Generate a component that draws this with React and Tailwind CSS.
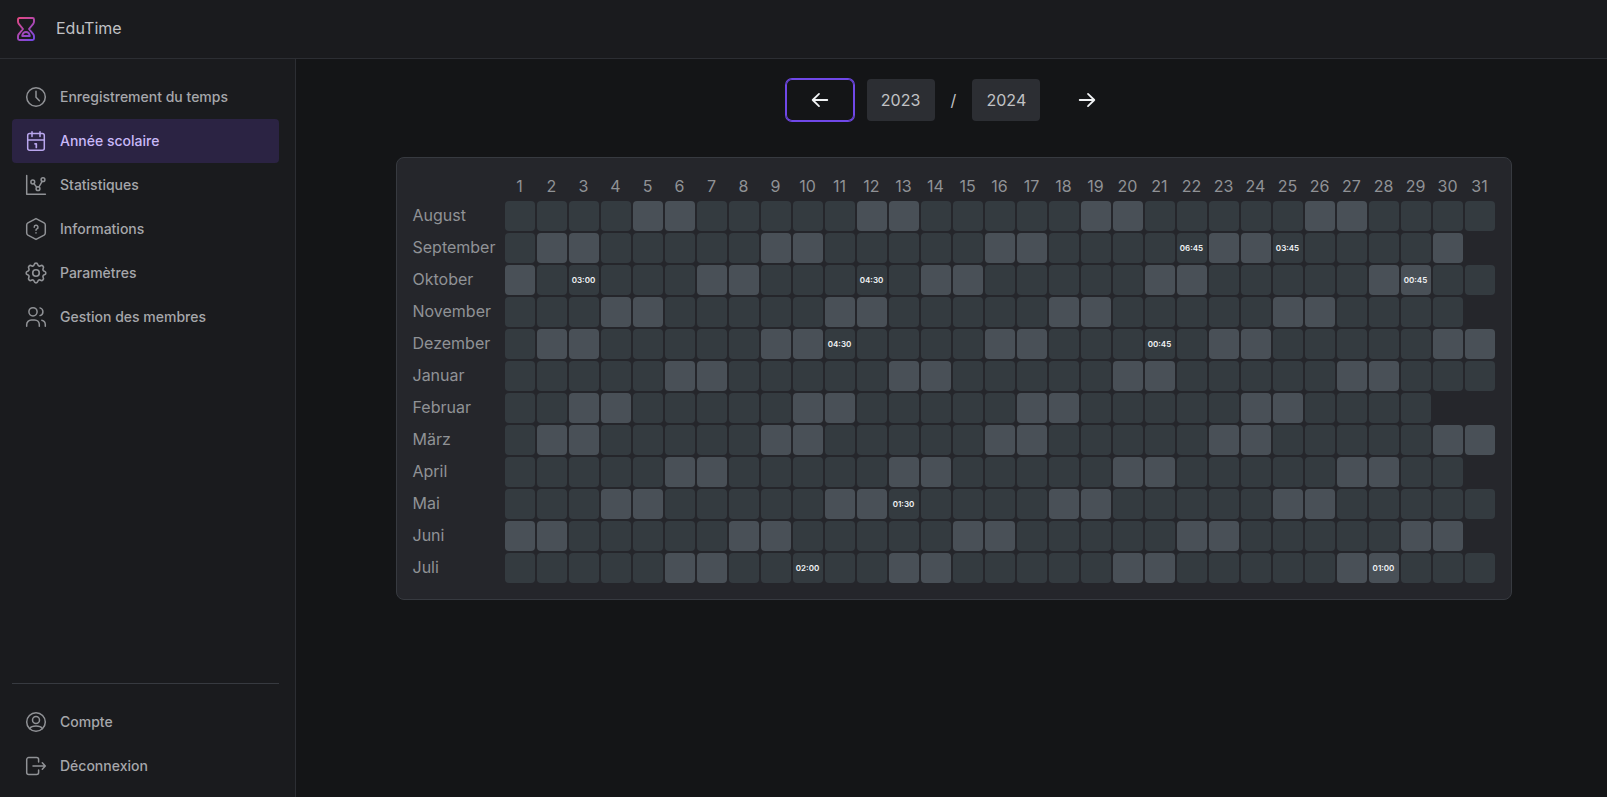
const navLinks = [
  { label: "Enregistrement du temps", icon: ClockIcon },
  { label: "Année scolaire", icon: CalendarIcon, active: true },
  { label: "Statistiques", icon: ChartIcon },
  { label: "Informations", icon: InfoIcon },
  { label: "Paramètres", icon: GearIcon },
  { label: "Gestion des membres", icon: UsersIcon },
];

const accountLinks = [
  { label: "Compte", icon: AccountIcon },
  { label: "Déconnexion", icon: LogoutIcon },
];

// month is zero based, entries maps day -> recorded time
const months = [
  { name: "August", year: 2023, month: 7, entries: {} },
  { name: "September", year: 2023, month: 8, entries: { 22: "06:45", 25: "03:45" } },
  { name: "Oktober", year: 2023, month: 9, entries: { 3: "03:00", 12: "04:30", 29: "00:45" } },
  { name: "November", year: 2023, month: 10, entries: {} },
  { name: "Dezember", year: 2023, month: 11, entries: { 11: "04:30", 21: "00:45" } },
  { name: "Januar", year: 2024, month: 0, entries: {} },
  { name: "Februar", year: 2024, month: 1, entries: {} },
  { name: "März", year: 2024, month: 2, entries: {} },
  { name: "April", year: 2024, month: 3, entries: {} },
  { name: "Mai", year: 2024, month: 4, entries: { 13: "01:30" } },
  { name: "Juni", year: 2024, month: 5, entries: {} },
  { name: "Juli", year: 2024, month: 6, entries: { 10: "02:00", 28: "01:00" } },
];

const days = Array.from({ length: 31 }, (_, i) => i + 1);

function Icon({ children, viewBox = "0 0 24 24" }) {
  return (
    <svg
      className="size-6 shrink-0"
      viewBox={viewBox}
      fill="none"
      stroke="currentColor"
      strokeWidth="1.5"
      strokeLinecap="round"
      strokeLinejoin="round"
      aria-hidden="true"
    >
      {children}
    </svg>
  );
}

function ClockIcon() {
  return (
    <Icon>
      <circle cx="12" cy="12" r="9.3" />
      <path d="M12 6.3v5.9l3.4 3.6" />
    </Icon>
  );
}

function CalendarIcon() {
  return (
    <Icon>
      <rect x="3.7" y="4.6" width="16.6" height="16.7" rx="2" />
      <path d="M3.7 10.9h16.6M8 2.7v4.7M16 2.7v4.7" />
      <path d="M11 14.8h1.300v3.600" strokeWidth="1.7" />
    </Icon>
  );
}

function ChartIcon() {
  return (
    <Icon>
      <path d="M2.7 2.6v18.700h18.700" />
      <circle cx="8.8" cy="9" r="1.9" />
      <circle cx="14" cy="15.7" r="1.9" />
      <circle cx="19" cy="6.7" r="1.9" />
      <path d="M9.9 10.6l2.9 3.6M15 14l3.1-5.6" />
    </Icon>
  );
}

function InfoIcon() {
  return (
    <Icon>
      <path d="M12 1.6l8.1 4.2q1.2.7 1.2 2.1v8.2q0 1.4-1.2 2.1L12 22.4l-8.1-4.2q-1.2-.7-1.2-2.1V7.9q0-1.4 1.2-2.1z" />
      <path d="M10.2 10.2a1.9 1.9 0 1 1 2.7 1.7c-.6.3-.9.7-.9 1.4" />
      <path d="M12 15.8v.1" />
    </Icon>
  );
}

function GearIcon() {
  return (
    <Icon viewBox="1 1 22 22">
      <path d="M10.325 4.317c.426-1.756 2.924-1.756 3.35 0a1.724 1.724 0 0 0 2.573 1.066c1.543-.94 3.31.826 2.37 2.37a1.724 1.724 0 0 0 1.065 2.572c1.756.426 1.756 2.924 0 3.35a1.724 1.724 0 0 0-1.066 2.573c.94 1.543-.826 3.31-2.37 2.37a1.724 1.724 0 0 0-2.572 1.065c-.426 1.756-2.924 1.756-3.35 0a1.724 1.724 0 0 0-2.573-1.066c-1.543.94-3.31-.826-2.37-2.37a1.724 1.724 0 0 0-1.065-2.572c-1.756-.426-1.756-2.924 0-3.35a1.724 1.724 0 0 0 1.066-2.573c-.94-1.543.826-3.31 2.37-2.37c1 .608 2.296.07 2.572-1.065z" />
      <circle cx="12" cy="12" r="3" />
    </Icon>
  );
}

function UsersIcon() {
  return (
    <Icon>
      <circle cx="9" cy="6.8" r="4.1" />
      <path d="M2.7 21.300v-1.700a4.600 4.600 0 0 1 4.600-4.600h3.400a4.600 4.600 0 0 1 4.600 4.600v1.700" />
      <path d="M16 2.9a4 4 0 0 1 0 7.7M17.8 15.2a4.6 4.6 0 0 1 3.5 4.4v1.7" />
    </Icon>
  );
}

function AccountIcon() {
  return (
    <Icon>
      <circle cx="12" cy="12" r="9.3" />
      <circle cx="12" cy="10" r="3.5" />
      <path d="M5.6 18.6c1.2-1.8 3.4-2.5 6.4-2.5s5.2.7 6.4 2.5" />
    </Icon>
  );
}

function LogoutIcon() {
  return (
    <Icon>
      <path d="M14.6 8V5.6a2 2 0 0 0-2-2H4.7a2 2 0 0 0-2 2v12.8a2 2 0 0 0 2 2h7.9a2 2 0 0 0 2-2V16" />
      <path d="M9 12h12.3M18.300 8.700l3 3.300-3 3.300" />
    </Icon>
  );
}

function Logo() {
  return (
    <svg className="size-6" viewBox="0 0 24 24" fill="none" strokeWidth="1.9" strokeLinejoin="round" aria-hidden="true">
      <defs>
        <linearGradient id="logo" x1="3" y1="1" x2="21" y2="23" gradientUnits="userSpaceOnUse">
          <stop stopColor="#e64980" />
          <stop offset="1" stopColor="#7048e8" />
        </linearGradient>
      </defs>
      <path
        stroke="url(#logo)"
        d="M5.500 1h13q1.500 0 1.500 1.500v2q0 1.300-.8 2.300L15 12l4.200 5.200q.8 1 .8 2.300v2q0 1.500-1.500 1.500h-13q-1.500 0-1.500-1.500v-2q0-1.300.8-2.300L9 12 4.800 6.800q-.8-1-.8-2.300v-2q0-1.500 1.500-1.500z"
      />
      <path stroke="url(#logo)" d="M8.200 19h7.600c-.4-2.600-1.900-4-3.800-4s-3.400 1.400-3.800 4z" />
    </svg>
  );
}

function NavLink({ label, icon: LinkIcon, active }) {
  return (
    <a
      href="#"
      aria-current={active ? "page" : undefined}
      className={
        active
          ? "flex h-11 items-center gap-3 rounded bg-[#2b2343] px-3 text-sm font-medium text-[#c9b8f8]"
          : "flex h-11 items-center gap-3 rounded px-3 text-sm font-medium text-[#a6a7ab]"
      }
    >
      <span className={active ? "text-[#b9a6ee]" : "text-[#909296]"}>
        <LinkIcon />
      </span>
      {label}
    </a>
  );
}

function ArrowIcon({ d }) {
  return (
    <svg
      className="size-6"
      viewBox="0 0 24 24"
      fill="none"
      stroke="currentColor"
      strokeWidth="1.8"
      strokeLinecap="round"
      strokeLinejoin="round"
      aria-hidden="true"
    >
      <path d={d} />
    </svg>
  );
}

function Day({ year, month, day, entry }) {
  const date = new Date(year, month, day);
  // short months leave the last columns empty
  if (date.getMonth() !== month) return <td />;

  const weekend = date.getDay() === 0 || date.getDay() === 6;
  return (
    <td
      className={
        weekend
          ? "rounded bg-[#495057] p-0 text-center text-[8px] font-semibold text-[#f1f3f5]"
          : "rounded bg-[#343b40] p-0 text-center text-[8px] font-semibold text-[#f1f3f5]"
      }
    >
      {entry}
    </td>
  );
}

function YearTable() {
  return (
    <div className="rounded-lg border border-[#373a40] bg-[#25262b] p-[14px]">
      <table className="w-[1086px] table-fixed border-separate border-spacing-[2px] text-base leading-5 text-[#909296]">
        <thead>
          <tr className="h-[25px]">
            <td className="w-[90px] p-0" />
            {days.map((day) => (
              <th key={day} scope="col" className="p-0 pb-0.5 font-normal">{day}</th>
            ))}
          </tr>
        </thead>
        <tbody>
          {months.map(({ name, year, month, entries }) => (
            <tr key={name} className="h-[30px]">
              <th scope="row" className="p-0 pb-0.5 text-left font-normal">{name}</th>
              {days.map((day) => (
                <Day key={day} year={year} month={month} day={day} entry={entries[day]} />
              ))}
            </tr>
          ))}
        </tbody>
      </table>
    </div>
  );
}

export default function App() {
  return (
    <div className="flex min-h-screen flex-col bg-[#141517] font-['Inter',sans-serif] text-[#c1c2c5]">
      <header className="flex h-[59px] items-center gap-[18px] border-b border-[#2c2e33] bg-[#1a1b1e] px-[14px]">
        <Logo />
        <span className="pb-0.5 text-base">EduTime</span>
      </header>

      <div className="flex flex-1">
        {/* Sidebar */}
        <aside className="flex w-[296px] shrink-0 flex-col border-r border-[#2c2e33] bg-[#1a1b1e] pt-4 pr-4 pb-[9px] pl-3">
          <nav className="flex-1">
            {navLinks.map((link) => (
              <NavLink key={link.label} {...link} />
            ))}
          </nav>
          <div className="border-t border-[#373a40] pt-4">
            {accountLinks.map((link) => (
              <NavLink key={link.label} {...link} />
            ))}
          </div>
        </aside>

        {/* School year */}
        <main className="flex flex-1 flex-col items-center gap-9 pt-5 pl-1">
          <div className="flex items-center gap-[13px]">
            <button
              aria-label="Année précédente"
              className="flex h-[42px] w-[68px] items-center justify-center rounded-md text-[#f1f3f5] ring-1 ring-[#7048e8] inset-ring inset-ring-[#7048e8]"
            >
              <ArrowIcon d="M19.300 12H4.700M11 5.900L4.700 12l6.300 6.100" />
            </button>
            <div className="flex items-center gap-4">
              <span className="flex h-[42px] w-[68px] items-center justify-center rounded bg-[#2c2e33]">2023</span>
              <span>/</span>
              <span className="flex h-[42px] w-[68px] items-center justify-center rounded bg-[#2c2e33]">2024</span>
            </div>
            <button
              aria-label="Année suivante"
              className="flex h-[42px] w-[68px] items-center justify-center rounded-md text-[#f1f3f5]"
            >
              <ArrowIcon d="M4.700 12h14.600M13 5.900l6.300 6.100-6.300 6.100" />
            </button>
          </div>

          <YearTable />
        </main>
      </div>
    </div>
  );
}
